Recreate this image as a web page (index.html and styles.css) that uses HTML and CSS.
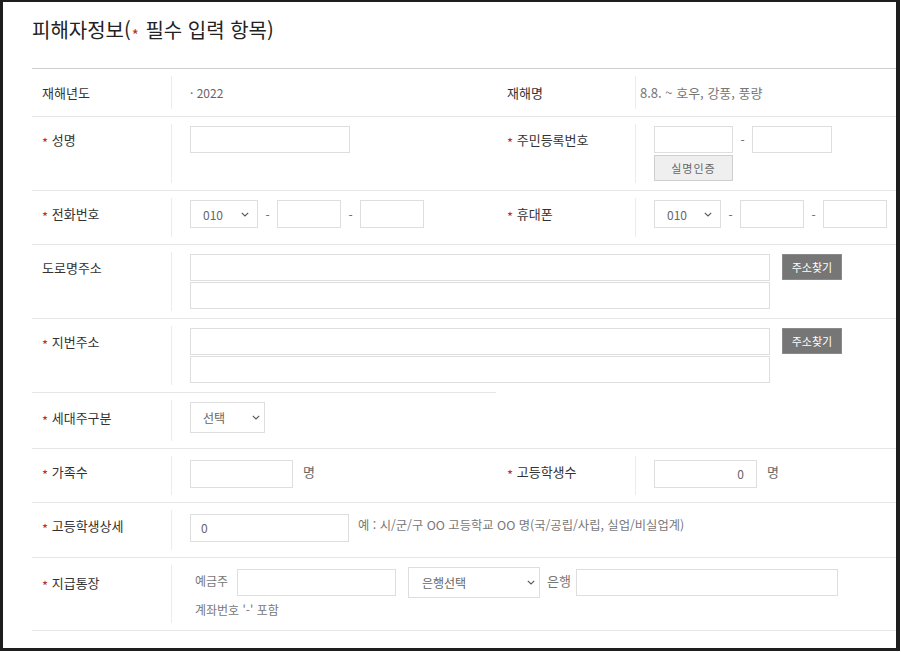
FILE: index.html
```html
<!DOCTYPE html>
<html lang="ko">
<head>
<meta charset="utf-8">
<title>피해자정보</title>
<link rel="stylesheet" href="styles.css">
</head>
<body>
<div class="frame">
  <h2 class="title">피해자정보(<span class="req">*</span> 필수 입력 항목)</h2>
  <div class="form">
    <div class="row row-info">
      <div class="th">재해년도</div>
      <div class="td">· 2022</div>
      <div class="th r">재해명</div>
      <div class="td td-name">8.8. ~ 호우, 강풍, 풍량</div>
    </div>

    <div class="row">
      <div class="th"><span class="req">*</span> 성명</div>
      <div class="td"><input class="input in-name" type="text"></div>
      <div class="th r"><span class="req">*</span> 주민등록번호</div>
      <div class="td">
        <div class="line">
          <input class="input in-jumin" type="text"><span class="dash">-</span><input class="input in-jumin2" type="text">
        </div>
        <button class="btn-verify" type="button">실명인증</button>
      </div>
    </div>

    <div class="row">
      <div class="th"><span class="req">*</span> 전화번호</div>
      <div class="td">
        <div class="line">
          <div class="select sel-phone"><span>010</span><svg class="chev" width="8" height="5" viewBox="0 0 8 5"><path d="M0.8 0.8L4 4L7.2 0.8" fill="none" stroke="#555" stroke-width="1.1"/></svg></div>
          <span class="dash">-</span><input class="input in-phone" type="text"><span class="dash">-</span><input class="input in-phone" type="text">
        </div>
      </div>
      <div class="th r"><span class="req">*</span> 휴대폰</div>
      <div class="td">
        <div class="line">
          <div class="select sel-phone2"><span>010</span><svg class="chev" width="8" height="5" viewBox="0 0 8 5"><path d="M0.8 0.8L4 4L7.2 0.8" fill="none" stroke="#555" stroke-width="1.1"/></svg></div>
          <span class="dash">-</span><input class="input in-phone" type="text"><span class="dash">-</span><input class="input in-phone" type="text">
        </div>
      </div>
    </div>

    <div class="row">
      <div class="th">도로명주소</div>
      <div class="td span3">
        <div class="line">
          <input class="input in-addr" type="text"><button class="btn-addr" type="button">주소찾기</button>
        </div>
        <input class="input in-addr stack" type="text">
      </div>
    </div>

    <div class="row row-open">
      <div class="th"><span class="req">*</span> 지번주소</div>
      <div class="td span3">
        <div class="line">
          <input class="input in-addr" type="text"><button class="btn-addr" type="button">주소찾기</button>
        </div>
        <input class="input in-addr stack" type="text">
      </div>
    </div>

    <div class="row row-half">
      <div class="th th-tall"><span class="req">*</span> 세대주구분</div>
      <div class="td">
        <div class="select sel-house"><span>선택</span><svg class="chev" width="8" height="5" viewBox="0 0 8 5"><path d="M0.8 0.8L4 4L7.2 0.8" fill="none" stroke="#555" stroke-width="1.1"/></svg></div>
      </div>
    </div>

    <div class="row">
      <div class="th"><span class="req">*</span> 가족수</div>
      <div class="td">
        <div class="line"><input class="input in-count" type="text"><span class="unit">명</span></div>
      </div>
      <div class="th r"><span class="req">*</span> 고등학생수</div>
      <div class="td">
        <div class="line"><input class="input in-count num" type="text" value="0"><span class="unit">명</span></div>
      </div>
    </div>

    <div class="row row-tall">
      <div class="th"><span class="req">*</span> 고등학생상세</div>
      <div class="td span3">
        <div class="line"><input class="input in-detail" type="text" value="0"><span class="note">예 : 시/군/구 OO 고등학교 OO 명(국/공립/사립, 실업/비실업계)</span></div>
      </div>
    </div>

    <div class="row">
      <div class="th th-tall"><span class="req">*</span> 지급통장</div>
      <div class="td span3">
        <div class="line">
          <span class="owner">예금주</span>
          <input class="input in-owner" type="text">
          <div class="select sel-bank"><span>은행선택</span><svg class="chev" width="8" height="5" viewBox="0 0 8 5"><path d="M0.8 0.8L4 4L7.2 0.8" fill="none" stroke="#555" stroke-width="1.1"/></svg></div>
          <span class="bank">은행</span>
          <input class="input in-account" type="text">
        </div>
        <div class="acct-note">계좌번호 '-' 포함</div>
      </div>
    </div>
  </div>
</div>
</body>
</html>
```

FILE: styles.css
```css
body {
  margin: 0;
  background: #fff;
  font-family: "Noto Sans CJK KR", "Liberation Sans", sans-serif;
  color: #333;
}

.frame {
  width: 900px;
  height: 651px;
  box-sizing: border-box;
  border-style: solid;
  border-color: #1e1e1e;
  border-width: 2px 4px 3px 3px;
  padding: 14px 0 0 29px;
  overflow: hidden;
}

.title {
  margin: 0;
  font-size: 20px;
  font-weight: 400;
  line-height: 28px;
  color: #222;
}

.req {
  color: #b8322a;
  font-size: 13px;
  vertical-align: -3px;
}

.title .req {
  font-size: 15px;
  margin: 0 1px;
  vertical-align: -3px;
}

.form {
  margin-top: 19px;
  border-top: 1px solid #cfcfcf;
}

.row {
  display: grid;
  grid-template-columns: 139px 325px 139px 1fr;
  min-height: 53px;
  border-bottom: 1px solid #e6e6e6;
}

.row-info {
  min-height: 0;
}

.row-tall {
  min-height: 54px;
}

.row-open {
  border-bottom: none;
}

.row-half {
  min-height: 56px;
}

.row-half .th,
.row-half .td {
  border-top: 1px solid #e6e6e6;
}

.th {
  padding: 9px 10px;
  font-size: 13px;
  line-height: 27px;
  color: #333;
  white-space: nowrap;
}

.th.r {
  padding-left: 11px;
}

.th.th-tall {
  padding-top: 11px;
}

.td {
  padding: 9px 0 9px 19px;
  font-size: 12px;
  line-height: 27px;
  color: #666;
  background: linear-gradient(#ececec, #ececec) left center / 1px calc(100% - 14px) no-repeat;
}

.span3 {
  grid-column: span 3;
}

.row-info .th,
.row-info .td {
  padding-top: 10px;
  padding-bottom: 10px;
}

.row-info .td-name {
  padding-left: 5px;
  font-size: 13px;
  color: #777;
}

.line {
  display: flex;
  align-items: center;
}

.input {
  display: block;
  box-sizing: border-box;
  height: 27px;
  margin: 0;
  padding: 0 10px;
  border: 1px solid #dedede;
  border-radius: 0;
  background: #fff;
  font-family: inherit;
  font-size: 12px;
  color: #666;
  outline: none;
}

.in-name { width: 160px; }
.in-jumin { width: 79px; }
.in-jumin2 { width: 80px; }
.in-phone { width: 64px; height: 28px; }
.in-addr { width: 580px; }
.in-addr.stack { margin-top: 1px; }
.in-count { width: 103px; height: 28px; }
.in-count.num { text-align: right; padding-right: 12px; }
.in-detail { width: 159px; height: 28px; }
.in-owner { width: 159px; }
.in-account { width: 262px; }

.dash {
  width: 5px;
  margin: 0 7px;
  text-align: center;
  color: #666;
  font-size: 12px;
}

.select {
  display: flex;
  align-items: center;
  justify-content: space-between;
  box-sizing: border-box;
  height: 28px;
  padding: 0 8px 0 12px;
  border: 1px solid #dedede;
  background: #fff;
  font-size: 12px;
  color: #666;
}

.sel-phone { width: 68px; }
.sel-phone2 { width: 67px; }
.sel-house { width: 75px; height: 31px; padding-right: 4px; }
.sel-bank { width: 132px; height: 31px; margin-left: 12px; padding-left: 13px; padding-right: 4px; }

.chev { display: block; }

.btn-verify {
  display: block;
  box-sizing: border-box;
  width: 79px;
  height: 26px;
  margin-top: 2px;
  padding: 0;
  border: 1px solid #cfcfcf;
  background: #efefef;
  font-family: inherit;
  font-size: 11px;
  letter-spacing: 1px;
  color: #666;
}

.btn-addr {
  box-sizing: border-box;
  width: 60px;
  height: 26px;
  margin-left: 12px;
  padding: 0;
  border: 1px solid #8a8a8a;
  background: #767676;
  font-family: inherit;
  font-size: 11px;
  color: #fff;
  align-self: flex-start;
}

.unit {
  margin-left: 10px;
  font-size: 13px;
  color: #666;
  padding-bottom: 4px;
}

.note {
  margin-left: 9px;
  font-size: 12.3px;
  color: #777;
  padding-bottom: 4px;
}

.owner {
  box-sizing: border-box;
  width: 47px;
  padding-left: 5px;
  font-size: 12px;
  color: #777;
  padding-bottom: 4px;
}

.bank {
  margin: 0 5px 0 7px;
  font-size: 13px;
  color: #777;
  padding-bottom: 4px;
}

.acct-note {
  padding-left: 5px;
  font-size: 12px;
  line-height: 23px;
  color: #777;
}
```
